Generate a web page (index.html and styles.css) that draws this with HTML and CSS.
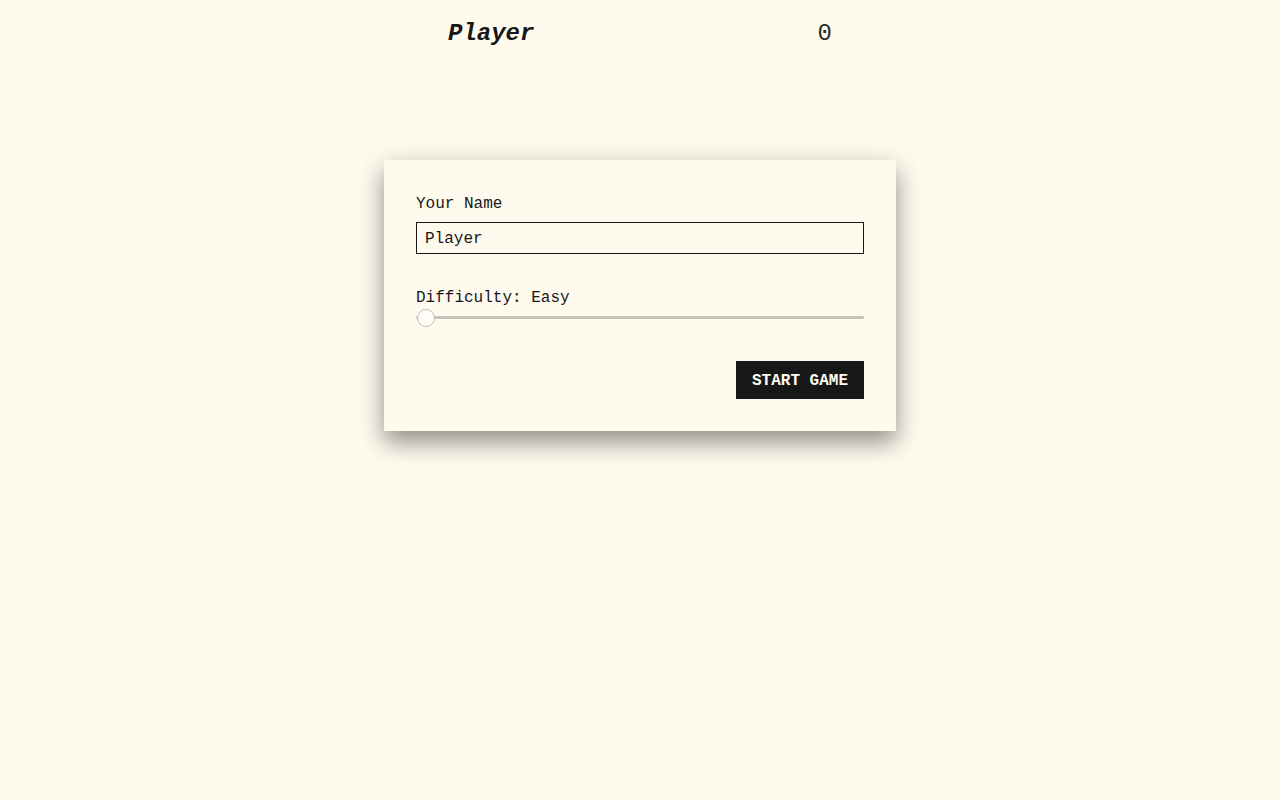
FILE: index.html
```html
<!DOCTYPE html>
<html lang="en">
<head>
<meta charset="utf-8">
<title>Player</title>
<link rel="stylesheet" href="styles.css">
</head>
<body>
<header class="topbar">
  <h1 class="player-name">Player</h1>
  <span class="score">0</span>
</header>
<main class="main">
  <form class="card">
    <div class="field">
      <label class="label" for="name">Your Name</label>
      <input class="text-input" id="name" type="text" value="Player">
    </div>
    <div class="field field-range">
      <label class="label" for="difficulty">Difficulty: Easy</label>
      <input class="range" id="difficulty" type="range" min="0" max="2" value="0">
    </div>
    <div class="actions">
      <button class="btn" type="button">START GAME</button>
    </div>
  </form>
</main>
</body>
</html>
```
FILE: styles.css
```css
* { box-sizing: border-box; }
html, body {
  margin: 0;
  padding: 0;
  background: #fffaee;
  color: #171717;
  font-family: "Liberation Mono", "DejaVu Sans Mono", monospace;
}
body {
  min-height: 100vh;
}
.topbar {
  width: 384px;
  margin: 0 auto;
  padding-top: 18px;
  display: flex;
  justify-content: space-between;
  align-items: center;
  height: 49px;
}
.player-name {
  margin: 0;
  font-size: 24px;
  line-height: 32px;
  font-weight: 700;
  font-style: italic;
}
.score {
  font-size: 24px;
  line-height: 32px;
  font-weight: 400;
  color: #2a2a2a;
}
.main {
  display: flex;
  justify-content: center;
  align-items: flex-start;
  padding-top: 111px;
  padding-bottom: 80px;
}
.card {
  width: 512px;
  padding: 32px;
  background: #fffaee;
  box-shadow: 0 12px 22px rgba(0, 0, 0, 0.38), 0 2px 30px rgba(0, 0, 0, 0.08);
  display: flex;
  flex-direction: column;
}
.field {
  display: flex;
  flex-direction: column;
}
.field-range {
  margin-top: 32px;
}
.label {
  font-size: 16px;
  line-height: 24px;
  margin-bottom: 6px;
}
.field-range .label {
  margin-bottom: 0;
}
.text-input {
  height: 32px;
  border: 1px solid #171717;
  background: transparent;
  padding: 1px 8px 0;
  font: inherit;
  font-size: 16px;
  line-height: 29px;
  color: #171717;
  border-radius: 0;
  outline: none;
}
.range {
  -webkit-appearance: none;
  appearance: none;
  width: 100%;
  height: 14px;
  margin: 0;
  background: transparent;
}
.range::-webkit-slider-runnable-track {
  height: 3px;
  background: #c9c3b7;
  border-radius: 2px;
}
.range::-webkit-slider-thumb {
  -webkit-appearance: none;
  width: 18px;
  height: 18px;
  border-radius: 50%;
  background: #fffdf8;
  border: 1px solid #c2beb6;
  margin-top: -7px;
  transform: translateX(1px);
}
.actions {
  display: flex;
  justify-content: flex-end;
  margin-top: 37px;
}
.btn {
  height: 38px;
  padding: 1px 16px 0;
  background: #171717;
  color: #fffaee;
  border: none;
  border-radius: 0;
  font-family: inherit;
  font-size: 16px;
  font-weight: 700;
}
```
